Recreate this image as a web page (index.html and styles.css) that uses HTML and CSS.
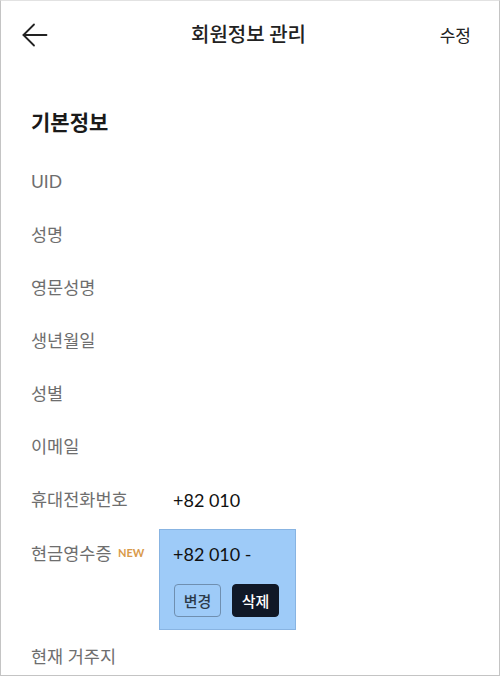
FILE: index.html
```html
<!DOCTYPE html>
<html>
<head>
<meta charset="utf-8">
<title>회원정보 관리</title>
<link rel="stylesheet" href="styles.css">
</head>
<body>
<div class="screen">
	<div class="topbar">
		<button type="button" class="back" aria-label="뒤로">
			<svg width="26" height="24" viewBox="0 0 26 24" fill="none" stroke="#222" stroke-width="1.8" stroke-linecap="round" stroke-linejoin="round">
				<path d="M1.5 12H24.5"/>
				<path d="M12 1.5L1.5 12L12 22.5"/>
			</svg>
		</button>
		<div class="title">회원정보 관리</div>
		<div class="edit">수정</div>
	</div>

	<h2 class="section">기본정보</h2>

	<div class="row"><div class="label">UID</div><div class="value"></div></div>
	<div class="row"><div class="label">성명</div><div class="value"></div></div>
	<div class="row"><div class="label">영문성명</div><div class="value"></div></div>
	<div class="row"><div class="label">생년월일</div><div class="value"></div></div>
	<div class="row"><div class="label">성별</div><div class="value"></div></div>
	<div class="row"><div class="label">이메일</div><div class="value"></div></div>
	<div class="row"><div class="label">휴대전화번호</div><div class="value">+82 010</div></div>
	<div class="row top">
		<div class="label padded">현금영수증 <span class="new">NEW</span></div>
		<div class="selected">
			<div class="value">+82 010 -</div>
			<div class="buttons">
				<button type="button" class="btn outline">변경</button>
				<button type="button" class="btn dark">삭제</button>
			</div>
		</div>
	</div>
	<div class="row"><div class="label">현재 거주지</div><div class="value"></div></div>
</div>
</body>
</html>
```

FILE: styles.css
```css
body {
  margin: 0;
  background-color: white;
  font-family: "Lato", "Noto Sans CJK KR", sans-serif;
}

.screen {
  width: 500px;
  height: 676px;
  box-sizing: border-box;
  border: 1px solid #c4c4c4;
  border-top-color: #e2e2e2;
  overflow: hidden;
  background-color: white;
}

.topbar {
  height: 64px;
  display: grid;
  grid-template-columns: 1fr auto 1fr;
  align-items: center;
  padding: 0 28px 0 21px;
}

.back {
  border: none;
  background: none;
  padding: 0;
  margin-top: 4px;
  width: 26px;
  height: 24px;
  display: flex;
}

.title {
  font-family: "Noto Sans CJK KR", sans-serif;
  font-size: 20px;
  font-weight: 500;
  color: #222;
  padding-left: 4px;
}

.edit {
  justify-self: end;
  font-family: "Noto Sans CJK KR", sans-serif;
  font-size: 17px;
  color: #222;
  margin-top: 2px;
}

.section {
  margin: 0;
  padding: 42px 30px 20px;
  line-height: 28px;
  font-family: "Noto Sans CJK KR", sans-serif;
  font-size: 21px;
  font-weight: 700;
  color: #1a1a1a;
}

.row {
  display: flex;
  align-items: center;
  height: 53px;
  padding-left: 30px;
}

.row.top {
  height: auto;
  align-items: flex-start;
}

.label {
  width: 128px;
  flex-shrink: 0;
  font-size: 17.5px;
  line-height: 24px;
  color: #6e6e6e;
}

.label.padded {
  padding-top: 15px;
}

.new {
  font-size: 11px;
  font-weight: 700;
  color: #d99a4a;
  vertical-align: 3px;
  margin-left: 2px;
}

.value {
  padding-left: 14px;
  font-size: 18px;
  line-height: 24px;
  color: #111;
}

.selected {
  margin-top: 3px;
  width: 137px;
  box-sizing: border-box;
  padding: 12px 0 12px 0;
  background-color: #9ecbf8;
  border: 1px solid #88b4e2;
}

.selected .value {
  padding-left: 13px;
}

.buttons {
  display: flex;
  gap: 11px;
  padding-left: 14px;
  margin-top: 18px;
}

.btn {
  height: 33px;
  width: 47px;
  padding: 0;
  border-radius: 4px;
  font-family: "Noto Sans CJK KR", sans-serif;
  font-size: 15px;
  font-weight: 500;
}

.outline {
  background: transparent;
  border: 1px solid #6f8fb0;
  color: #2b3a4a;
}

.dark {
  background-color: #101827;
  border: 1px solid #101827;
  color: white;
}
```
